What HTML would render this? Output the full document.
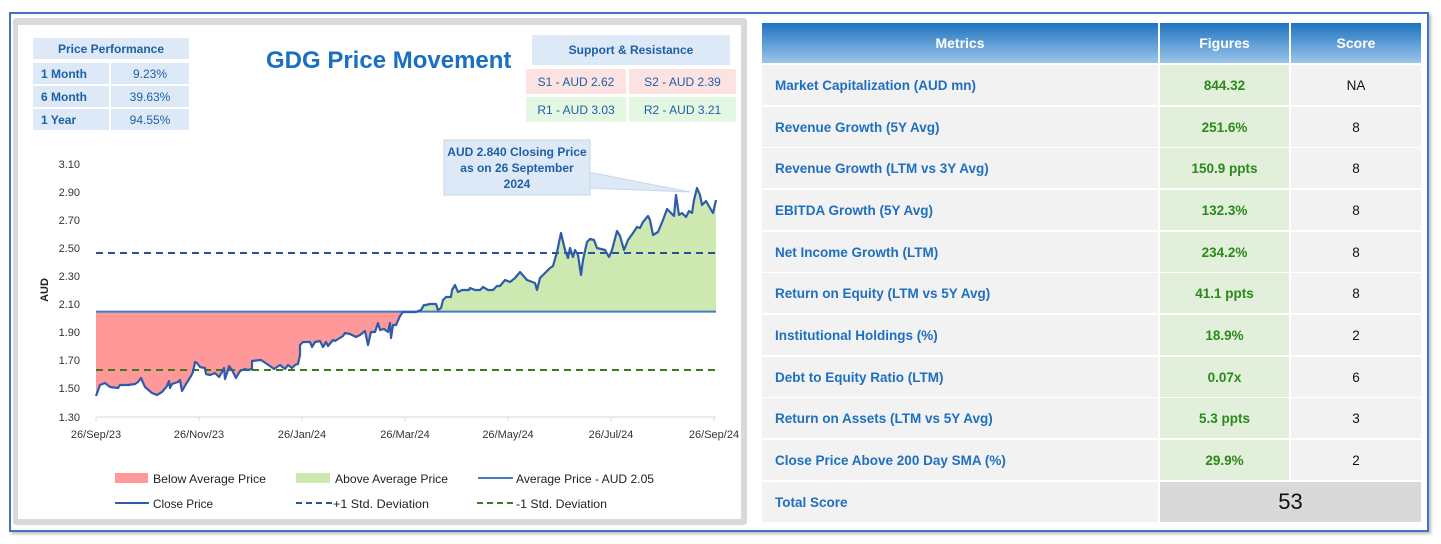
<!DOCTYPE html>
<html><head><meta charset="utf-8"><style>
*{margin:0;padding:0;box-sizing:border-box}
body{width:1441px;height:544px;background:#fff;position:relative;font-family:"Liberation Sans",sans-serif;overflow:hidden}
.a{position:absolute}
.outer{left:9px;top:12px;width:1420px;height:520px;border:2px solid #4472c4;box-shadow:2px 2px 3px #bbb}
.panel{left:13px;top:18px;width:734px;height:507px;background:#d9d9d9;border-radius:3px}
.inner{left:18px;top:25px;width:723px;height:494px;background:#fff}
.c{display:flex;align-items:center;justify-content:center;font-size:12px;font-weight:bold}
.pp{background:#dde9f6;color:#1f5fa8}
.hd{top:23px;height:40px;color:#fff;font-size:14px;font-weight:bold;background:linear-gradient(to bottom,#1e73c0,#9cc6ea)}
.row{position:absolute;height:40px;display:flex;align-items:center;font-size:14px}
.m{left:762px;width:396px;background:#f2f2f2;color:#1f6fc0;font-weight:bold;padding-left:13px;font-size:13.5px}
.f{left:1160px;width:129px;background:#e2efda;color:#2a8a1a;font-weight:bold;justify-content:center;font-size:13.5px}
.s{left:1291px;width:130px;background:#f2f2f2;color:#111;justify-content:center;font-size:13.5px}
</style></head><body>
<div class="a outer"></div>
<div class="a panel"></div>
<div class="a inner"></div>

<div class="a c pp" style="left:33px;top:38px;width:156px;height:21px">Price Performance</div>
<div class="a c pp" style="left:33px;top:63px;width:76px;height:21px;justify-content:flex-start;padding-left:8px">1 Month</div>
<div class="a c pp" style="left:111px;top:63px;width:78px;height:21px;font-weight:normal">9.23%</div>
<div class="a c pp" style="left:33px;top:86px;width:76px;height:21px;justify-content:flex-start;padding-left:8px">6 Month</div>
<div class="a c pp" style="left:111px;top:86px;width:78px;height:21px;font-weight:normal">39.63%</div>
<div class="a c pp" style="left:33px;top:109px;width:76px;height:21px;justify-content:flex-start;padding-left:8px">1 Year</div>
<div class="a c pp" style="left:111px;top:109px;width:78px;height:21px;font-weight:normal">94.55%</div>

<div class="a" style="left:266px;top:47px;font-size:24px;font-weight:bold;color:#1a6fc0">GDG Price Movement</div>

<div class="a c pp" style="left:532px;top:35px;width:198px;height:30px">Support &amp; Resistance</div>
<div class="a c" style="left:526px;top:69px;width:100px;height:25px;background:#fde2e2;color:#1f5fa8;font-weight:normal">S1 - AUD 2.62</div>
<div class="a c" style="left:629px;top:69px;width:107px;height:25px;background:#fde2e2;color:#1f5fa8;font-weight:normal">S2 - AUD 2.39</div>
<div class="a c" style="left:526px;top:97px;width:100px;height:25px;background:#e3f7e3;color:#1f5fa8;font-weight:normal">R1 - AUD 3.03</div>
<div class="a c" style="left:629px;top:97px;width:107px;height:25px;background:#e3f7e3;color:#1f5fa8;font-weight:normal">R2 - AUD 3.21</div>

<svg class="a" style="left:0;top:0" width="760" height="544">
<defs>
<clipPath id="below"><rect x="90" y="311.6" width="640" height="120"/></clipPath>
<clipPath id="above"><rect x="90" y="150" width="640" height="161.6"/></clipPath>
</defs>
<g id="fills"></g>
<line x1="96" y1="417" x2="716" y2="417" stroke="#d9d9d9"/>
<g stroke="#d9d9d9">
<line x1="96" y1="417" x2="96" y2="421"/><line x1="199" y1="417" x2="199" y2="421"/><line x1="302" y1="417" x2="302" y2="421"/><line x1="405" y1="417" x2="405" y2="421"/><line x1="508" y1="417" x2="508" y2="421"/><line x1="611" y1="417" x2="611" y2="421"/><line x1="714" y1="417" x2="714" y2="421"/>
</g>
<g font-size="11" fill="#333" text-anchor="end">
<text x="80" y="168">3.10</text><text x="80" y="196">2.90</text><text x="80" y="224">2.70</text><text x="80" y="252">2.50</text><text x="80" y="280">2.30</text><text x="80" y="308">2.10</text><text x="80" y="336">1.90</text><text x="80" y="364">1.70</text><text x="80" y="392">1.50</text><text x="80" y="421">1.30</text>
</g>
<g font-size="11" fill="#333" text-anchor="middle">
<text x="96" y="438">26/Sep/23</text><text x="199" y="438">26/Nov/23</text><text x="302" y="438">26/Jan/24</text><text x="405" y="438">26/Mar/24</text><text x="508" y="438">26/May/24</text><text x="611" y="438">26/Jul/24</text><text x="714" y="438">26/Sep/24</text>
</g>
<text x="48" y="290" font-size="11" font-weight="bold" fill="#222" transform="rotate(-90 48 290)" text-anchor="middle">AUD</text>
<line x1="96" y1="253" x2="716" y2="253" stroke="#2a4f9e" stroke-width="2" stroke-dasharray="7,5"/>
<line x1="96" y1="370" x2="716" y2="370" stroke="#3d7a1e" stroke-width="2" stroke-dasharray="7,5"/>
<line x1="96" y1="311.6" x2="716" y2="311.6" stroke="#3f7fc0" stroke-width="2"/>
<polyline id="price" fill="none" stroke="#2f5bab" stroke-width="2.2" stroke-linejoin="round" points=""/>
<polygon points="588,172 590,188 690,192" fill="#dde9f6" stroke="#c8d6e6"/>
<rect x="444" y="140" width="146" height="55" fill="#dde9f6" stroke="#c8d6e6"/>
<g font-size="12" font-weight="bold" fill="#1f5fa8" text-anchor="middle">
<text x="517" y="156">AUD 2.840 Closing Price</text><text x="517" y="172">as on 26 September</text><text x="517" y="188">2024</text>
</g>
<rect x="115" y="473" width="33" height="10" fill="#ff9999"/>
<text x="153" y="483" font-size="12" fill="#222" textLength="113" lengthAdjust="spacingAndGlyphs">Below Average Price</text>
<rect x="296" y="473" width="34" height="10" fill="#cde8b0"/>
<text x="335" y="483" font-size="12" fill="#222" textLength="113" lengthAdjust="spacingAndGlyphs">Above Average Price</text>
<line x1="478" y1="478" x2="513" y2="478" stroke="#3f7fc0" stroke-width="2"/>
<text x="516" y="483" font-size="12" fill="#222" textLength="138" lengthAdjust="spacingAndGlyphs">Average Price - AUD 2.05</text>
<line x1="115" y1="503" x2="149" y2="503" stroke="#2f5bab" stroke-width="2"/>
<text x="153" y="508" font-size="12" fill="#222" textLength="60" lengthAdjust="spacingAndGlyphs">Close Price</text>
<line x1="296" y1="503" x2="333" y2="503" stroke="#2a4f9e" stroke-width="2" stroke-dasharray="6,4"/>
<text x="333" y="508" font-size="12" fill="#222" textLength="96" lengthAdjust="spacingAndGlyphs">+1 Std. Deviation</text>
<line x1="477" y1="503" x2="514" y2="503" stroke="#3d7a1e" stroke-width="2" stroke-dasharray="6,4"/>
<text x="516" y="508" font-size="12" fill="#222" textLength="91" lengthAdjust="spacingAndGlyphs">-1 Std. Deviation</text>
</svg>

<div class="a row hd" style="left:762px;width:396px;justify-content:center">Metrics</div>
<div class="a row hd" style="left:1160px;width:129px;justify-content:center">Figures</div>
<div class="a row hd" style="left:1291px;width:130px;justify-content:center">Score</div>

<div class="row m" style="top:65px">Market Capitalization (AUD mn)</div><div class="row f" style="top:65px">844.32</div><div class="row s" style="top:65px">NA</div>
<div class="row m" style="top:107px">Revenue Growth (5Y Avg)</div><div class="row f" style="top:107px">251.6%</div><div class="row s" style="top:107px">8</div>
<div class="row m" style="top:148px">Revenue Growth (LTM vs 3Y Avg)</div><div class="row f" style="top:148px">150.9 ppts</div><div class="row s" style="top:148px">8</div>
<div class="row m" style="top:190px">EBITDA Growth (5Y Avg)</div><div class="row f" style="top:190px">132.3%</div><div class="row s" style="top:190px">8</div>
<div class="row m" style="top:232px">Net Income Growth (LTM)</div><div class="row f" style="top:232px">234.2%</div><div class="row s" style="top:232px">8</div>
<div class="row m" style="top:273px">Return on Equity (LTM vs 5Y Avg)</div><div class="row f" style="top:273px">41.1 ppts</div><div class="row s" style="top:273px">8</div>
<div class="row m" style="top:315px">Institutional Holdings (%)</div><div class="row f" style="top:315px">18.9%</div><div class="row s" style="top:315px">2</div>
<div class="row m" style="top:357px">Debt to Equity Ratio (LTM)</div><div class="row f" style="top:357px">0.07x</div><div class="row s" style="top:357px">6</div>
<div class="row m" style="top:398px">Return on Assets (LTM vs 5Y Avg)</div><div class="row f" style="top:398px">5.3 ppts</div><div class="row s" style="top:398px">3</div>
<div class="row m" style="top:440px">Close Price Above 200 Day SMA (%)</div><div class="row f" style="top:440px">29.9%</div><div class="row s" style="top:440px">2</div>
<div class="row m" style="top:482px">Total Score</div>
<div class="row" style="top:482px;left:1160px;width:261px;background:#d9d9d9;justify-content:center;font-size:22px;color:#111">53</div>

<script>
var P="96,396 100,385 105,383 110,387 118,388 120,385 128,385 135,384 138,382 141,378 145,387 152,393 157,395 162,392 167,386 169,381 170,388 172,384 178,382 180,380 182,391 186,384 191,376 193,372 195,362 197,363 200,367 205,368 206,374 210,375 215,373 219,377 222,372 224,368 225,379 228,370 229,366 232,370 236,378 240,371 245,369 248,370 252,369 252,361 261,360 270,366 274,369 280,365 285,369 288,365 292,368 295,365 298,364 300,355 300,345 303,342 310,342 312,347 315,342 320,341 323,347 326,342 328,346 333,340 335,341 343,336 345,333 350,334 356,337 360,335 365,331 368,345 371,332 375,332 378,323 380,330 384,329 388,332 390,323 391,338 393,325 396,325 400,316 403,312 416,312 421,310 424,305 426,305 430,304 436,304 438,310 441,308 443,300 446,297 451,297 452,290 455,285 458,292 462,290 469,290 470,288 475,290 480,290 483,287 488,290 493,290 497,286 500,286 505,280 510,282 515,278 520,272 527,280 535,283 537,290 540,278 545,273 550,268 553,266 557,252 561,233 565,250 568,258 570,248 573,257 575,250 578,255 581,275 583,260 587,242 590,239 594,240 597,248 605,250 609,257 612,250 617,231 620,236 624,250 628,240 633,233 637,227 640,228 643,222 648,216 650,220 653,235 658,232 663,220 667,209 670,212 674,216 676,195 679,215 682,213 686,217 689,211 692,213 694,200 697,188 700,195 702,205 706,201 710,208 713,213 716,200";
document.getElementById('price').setAttribute('points',P);
var ns="http://www.w3.org/2000/svg",g=document.getElementById('fills');
[["below","#ff9999"],["above","#cde8b0"]].forEach(function(d){var p=document.createElementNS(ns,"polygon");p.setAttribute("clip-path","url(#"+d[0]+")");p.setAttribute("fill",d[1]);p.setAttribute("points","96,311.6 "+P+" 716,311.6");g.appendChild(p);});
</script>
</body></html>
